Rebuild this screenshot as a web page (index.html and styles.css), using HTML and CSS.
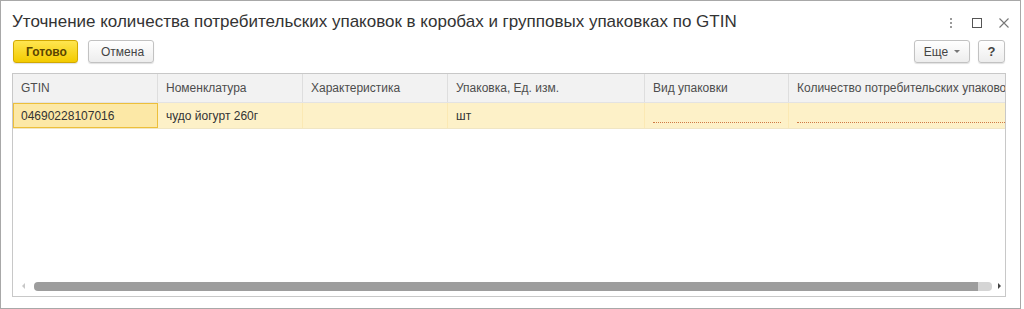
FILE: index.html
```html
<!DOCTYPE html>
<html lang="ru">
<head>
    <meta charset="UTF-8">
    <title>Уточнение количества</title>
    <link rel="stylesheet" href="styles.css">
</head>
<body>
    <div class="window">
        <div class="title-bar">
            <h1 class="title">Уточнение количества потребительских упаковок в коробах и групповых упаковках по GTIN</h1>
            <div class="window-icons">
                <svg class="icon" width="10" height="12" viewBox="0 0 10 12">
                    <rect x="4" y="1" width="2" height="2" fill="#9a9a9a"/>
                    <rect x="4" y="5" width="2" height="2" fill="#9a9a9a"/>
                    <rect x="4" y="9" width="2" height="2" fill="#9a9a9a"/>
                </svg>
                <svg class="icon" width="12" height="12" viewBox="0 0 12 12">
                    <rect x="1.5" y="1.5" width="9" height="9" fill="none" stroke="#555" stroke-width="1"/>
                </svg>
                <svg class="icon" width="12" height="12" viewBox="0 0 12 12">
                    <path d="M1.5 1.5 L10.5 10.5 M10.5 1.5 L1.5 10.5" stroke="#777" stroke-width="1.1"/>
                </svg>
            </div>
        </div>

        <div class="toolbar">
            <button class="btn btn-default">Готово</button>
            <button class="btn btn-cancel">Отмена</button>
            <div class="spacer"></div>
            <button class="btn btn-more">Еще <span class="caret"></span></button>
            <button class="btn btn-help">?</button>
        </div>

        <div class="grid">
            <div class="grid-row grid-head">
                <div class="cell c1">GTIN</div>
                <div class="cell c2">Номенклатура</div>
                <div class="cell c3">Характеристика</div>
                <div class="cell c4">Упаковка, Ед. изм.</div>
                <div class="cell c5">Вид упаковки</div>
                <div class="cell c6">Количество потребительских упаковок</div>
            </div>
            <div class="grid-row grid-data">
                <div class="cell c1 selected">04690228107016</div>
                <div class="cell c2">чудо йогурт 260г</div>
                <div class="cell c3"></div>
                <div class="cell c4">шт</div>
                <div class="cell c5"><span class="required"></span></div>
                <div class="cell c6"><span class="required"></span></div>
            </div>
            <div class="grid-body"></div>
            <div class="hscroll">
                <span class="arrow-left"></span>
                <div class="track">
                    <div class="thumb"></div>
                    <div class="thumb-end"></div>
                </div>
                <span class="arrow-right"></span>
            </div>
        </div>
    </div>
</body>
</html>
```

FILE: styles.css
```css
* {
    margin: 0;
    padding: 0;
    box-sizing: border-box;
}

body {
    background-color: #ffffff;
    font-family: "Liberation Sans", Arial, sans-serif;
    color: #333;
}

.window {
    width: 1021px;
    height: 309px;
    border: 1px solid #a8a8a8;
    display: flex;
    flex-direction: column;
    background-color: #fff;
}

.title-bar {
    display: flex;
    align-items: center;
    height: 39px;
    padding-left: 11px;
    padding-top: 2px;
}

.title {
    flex: 1;
    font-size: 17px;
    font-weight: normal;
    color: #333;
    white-space: nowrap;
}

.window-icons {
    display: flex;
    align-items: center;
    gap: 15px;
    margin-right: 10px;
    margin-top: 2px;
}

.icon {
    display: block;
}

.toolbar {
    display: flex;
    align-items: center;
    height: 23px;
    padding: 0 15px 0 12px;
    gap: 10px;
}

.spacer {
    flex: 1;
}

.btn {
    height: 23px;
    padding: 0 12px;
    font-family: "Liberation Sans", Arial, sans-serif;
    font-size: 12px;
    color: #444;
    background: linear-gradient(#ffffff, #ededed);
    border: 1px solid #c2c2c2;
    border-radius: 3px;
    box-shadow: 0 1px 1px rgba(0, 0, 0, 0.12);
}

.btn-default {
    width: 65px;
    font-weight: bold;
    color: #5a4500;
    background: linear-gradient(#ffe550, #f3cb00);
    border-color: #d2a900;
}

.btn-cancel {
    width: 66px;
}

.btn-more {
    width: 56px;
    padding: 0 8px;
    display: flex;
    align-items: center;
    justify-content: center;
    gap: 6px;
}

.caret {
    width: 0;
    height: 0;
    border-left: 3px solid transparent;
    border-right: 3px solid transparent;
    border-top: 3px solid #777;
}

.btn-help {
    width: 27px;
    padding: 0;
    font-weight: bold;
    font-size: 13px;
    margin-left: -2px;
}

.grid {
    margin: 10px 14px 11px 11px;
    flex: 1;
    border: 1px solid #c8c8c8;
    display: flex;
    flex-direction: column;
    overflow: hidden;
}

.grid-row {
    display: flex;
    white-space: nowrap;
}

.grid-head {
    height: 29px;
    background-color: #f2f2f2;
    border-bottom: 1px solid #e3e3e3;
    color: #4d4d4d;
}

.grid-data {
    height: 26px;
    background-color: #fdf1c8;
    border-bottom: 1px solid #f0e6c4;
}

.cell {
    font-size: 12px;
    padding-left: 8px;
    display: flex;
    align-items: center;
    flex-shrink: 0;
    overflow: hidden;
    border-right: 1px solid #dedede;
}

.grid-data .cell {
    border-right-color: #fbe9b4;
}

.c1 { width: 145px; }
.c2 { width: 145px; }
.c3 { width: 145px; }
.c4 { width: 197px; }
.c5 { width: 144px; }
.c6 { width: 220px; border-right: none; }

.grid-data .selected {
    background-color: #fce8a6;
    border: 1px solid #edbf3a;
    padding-left: 7px;
    color: #333;
}

.required {
    display: block;
    width: 128px;
    height: 1px;
    margin-top: 13px;
    border-bottom: 1px dotted #cf7a45;
}

.c6 .required {
    width: 220px;
}

.grid-body {
    flex: 1;
}

.hscroll {
    display: flex;
    align-items: center;
    height: 10px;
    margin-bottom: 5px;
    padding: 0 4px 0 9px;
}

.arrow-left {
    width: 0;
    height: 0;
    border-top: 3px solid transparent;
    border-bottom: 3px solid transparent;
    border-right: 3px solid #c8c8c8;
}

.track {
    flex: 1;
    display: flex;
    height: 9px;
    margin: 0 6px 0 9px;
}

.thumb {
    flex: 1;
    background-color: #9d9d9d;
    border-radius: 4px;
}

.thumb-end {
    width: 14px;
    margin-left: -4px;
    background-color: #d5d5d5;
    border-radius: 0 4px 4px 0;
}

.arrow-right {
    width: 0;
    height: 0;
    border-top: 3px solid transparent;
    border-bottom: 3px solid transparent;
    border-left: 3px solid #444;
}
```
